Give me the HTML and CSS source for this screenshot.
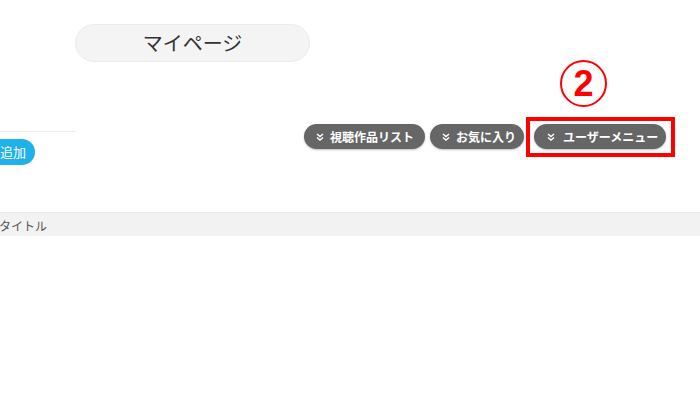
FILE: index.html
```html
<!DOCTYPE html>
<html lang="ja">
<head>
    <meta charset="UTF-8">
    <meta name="viewport" content="width=device-width, initial-scale=1.0">
    <title>マイページ</title>
    <link rel="stylesheet" href="styles.css">
</head>
<body>
    <div class="header">
        <h1 class="page-title">マイページ</h1>
    </div>

    <div class="toolbar">
        <div class="toolbar-left">
            <div class="rule"></div>
            <button class="add-btn" type="button">追加</button>
        </div>

        <!-- menu buttons -->
        <div class="actions">
            <button class="menu-btn btn-list" type="button">
                <svg class="chev" viewBox="0 0 8 8" width="8" height="8"><polyline points="1,1 4,3.5 7,1"/><polyline points="1,4.5 4,7 7,4.5"/></svg>
                視聴作品リスト
            </button>
            <button class="menu-btn btn-fav" type="button">
                <svg class="chev" viewBox="0 0 8 8" width="8" height="8"><polyline points="1,1 4,3.5 7,1"/><polyline points="1,4.5 4,7 7,4.5"/></svg>
                お気に入り
            </button>
            <div class="highlight">
                <span class="step-no">2</span>
                <button class="menu-btn btn-user" type="button">
                    <svg class="chev" viewBox="0 0 8 8" width="8" height="8"><polyline points="1,1 4,3.5 7,1"/><polyline points="1,4.5 4,7 7,4.5"/></svg>
                    ユーザーメニュー
                </button>
            </div>
        </div>
    </div>

    <div class="table-head">
        <span class="col-title">タイトル</span>
    </div>
</body>
</html>
```

FILE: styles.css
```css
body {
    margin: 0;
    font-family: "Noto Sans CJK JP", "Noto Sans", sans-serif;
    background: #fff;
    color: #333;
    overflow: hidden;
}
.header {
    padding: 24px 0 0 75px;
}
.page-title {
    margin: 0;
    width: 233px;
    height: 36px;
    line-height: 36px;
    border: 1px solid #ececec;
    border-radius: 19px;
    background: #f4f4f4;
    text-align: center;
    font-size: 20px;
    font-weight: normal;
    color: #333;
}
.toolbar {
    display: flex;
    align-items: flex-start;
    margin-top: 62px;
}
.toolbar-left {
    width: 76px;
    padding-top: 7px;
}
.rule {
    border-top: 1px solid #eeeeee;
}
.add-btn {
    display: block;
    margin: 7px 0 0 -13px;
    height: 26px;
    padding: 0 9px 0 13px;
    border: none;
    border-radius: 13px;
    background: #1fb1ea;
    color: #fff;
    font-family: inherit;
    font-size: 13px;
    line-height: 26px;
    white-space: nowrap;
}
.actions {
    display: flex;
    align-items: center;
    margin-left: 228px;
}
.menu-btn {
    display: flex;
    align-items: center;
    gap: 6px;
    height: 25px;
    padding: 0 12px;
    border: none;
    border-radius: 13px;
    background: #666666;
    color: #fff;
    font-family: inherit;
    font-size: 12px;
    font-weight: bold;
    white-space: nowrap;
    box-shadow: 0 1px 2px rgba(0, 0, 0, 0.25);
}
.chev {
    flex-shrink: 0;
    fill: none;
    stroke: #fff;
    stroke-width: 1.5;
}
.btn-list {
    width: 121px;
}
.btn-fav {
    width: 94px;
    margin-left: 5px;
}
.highlight {
    position: relative;
    margin-left: 10px;
}
.btn-user {
    width: 132px;
    gap: 8px;
    padding-left: 13px;
}
.highlight::after {
    content: "";
    position: absolute;
    top: -7px;
    bottom: -8px;
    left: -8px;
    right: -9px;
    border: 4px solid #ff0000;
}
.step-no {
    position: absolute;
    left: 26px;
    top: -64px;
    width: 43px;
    height: 43px;
    border: 2px solid #ff0000;
    border-radius: 50%;
    color: #ff0000;
    font-family: "Liberation Sans", Arial, sans-serif;
    font-weight: bold;
    font-size: 36px;
    line-height: 44px;
    text-align: center;
}
.table-head {
    margin-top: 47px;
    height: 23px;
    line-height: 23px;
    background: #f2f2f2;
    border-top: 1px solid #ebebeb;
}
.col-title {
    margin-left: -1px;
    font-size: 12px;
    color: #555;
}
```
